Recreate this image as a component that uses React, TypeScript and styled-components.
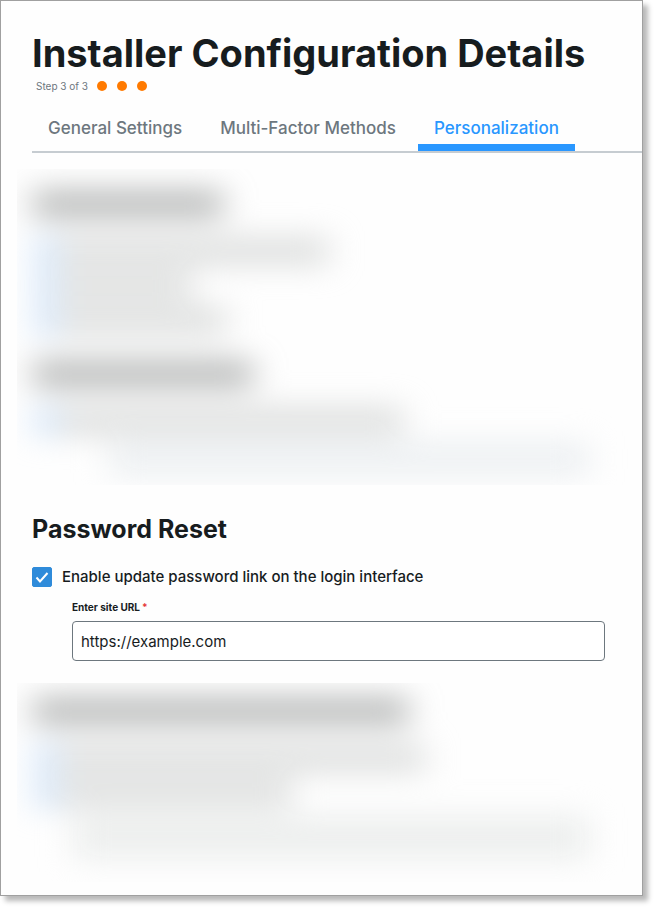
import React, { useState } from "react";
import styled, { createGlobalStyle } from "styled-components";

const GlobalStyle = createGlobalStyle`
  * { box-sizing: border-box; }
  body {
    margin: 0;
    background: #fff;
    color: #171c1e;
    font-family: Inter, "Open Sans", sans-serif;
  }
`;

const Page = styled.div`
  padding: 0 15px 15px 0;
`;

const Panel = styled.main`
  display: flex;
  flex-direction: column;
  padding: 28px 0 13px;
  border: 1px solid #a0a0a0;
  background: #fefefe;
  box-shadow: 5px 5px 5px rgba(0, 0, 0, 0.28);
`;

const Title = styled.h1`
  margin: 0;
  padding-left: 31px;
  font-size: 38px;
  font-weight: 700;
  line-height: 48px;
  white-space: nowrap;
`;

const Steps = styled.div`
  display: flex;
  align-items: center;
  height: 18px;
  padding-left: 35px;
`;

const StepText = styled.span`
  margin-right: 9px;
  color: #6d777e;
  font-size: 10px;
  line-height: 16px;
`;

const Dots = styled.span`
  display: flex;
  gap: 10px;
`;

const Dot = styled.i`
  width: 10px;
  height: 10px;
  border-radius: 50%;
  background: #ff7a00;
`;

const Tabs = styled.nav`
  display: flex;
  gap: 6px;
  height: 58px;
  margin: 0 0 16px 31px;
  padding-top: 22px;
  border-bottom: 2px solid #c6ccd1;
`;

const Tab = styled.button<{ $active: boolean }>`
  padding: 0 16px 5px;
  border: 0;
  border-bottom: 7px solid ${(p) => (p.$active ? "#2997ff" : "transparent")};
  background: none;
  color: ${(p) => (p.$active ? "#2997ff" : "#6d777e")};
  font: 500 17px/20px Inter, "Open Sans", sans-serif;
  white-space: nowrap;
  cursor: pointer;
`;

const Obscured = styled.div`
  overflow: hidden;
  margin-left: 16px;
`;

const Haze = styled.div<{ $top: number; $bottom: number }>`
  display: flex;
  flex-direction: column;
  padding: ${(p) => p.$top}px 37px ${(p) => p.$bottom}px 16px;
  filter: blur(16px);
`;

const HazeHeading = styled.div<{ $width: number }>`
  width: ${(p) => p.$width}px;
  height: 16px;
  margin: 20px 0 29px;
  background: #868988;
`;

const HazeRow = styled.div`
  display: flex;
  height: 20px;
  margin-bottom: 15px;
`;

const HazeBox = styled.i`
  width: 26px;
  background: #c4ddfa;
`;

const HazeText = styled.i<{ $width: number }>`
  width: ${(p) => p.$width}px;
  background: #d1d3d2;
`;

const HazeField = styled.div<{ $indent: number; $height: number; $tint: string }>`
  height: ${(p) => p.$height}px;
  margin: 0 16px 13px ${(p) => p.$indent}px;
  background: ${(p) => p.$tint};
`;

const Section = styled.section`
  display: flex;
  flex-direction: column;
  padding: 28px 37px 22px 31px;
`;

const SectionTitle = styled.h2`
  margin: 0 0 22px;
  font-size: 25px;
  font-weight: 700;
  line-height: 32px;
`;

const CheckLabel = styled.label`
  display: flex;
  align-items: center;
  gap: 10px;
  font-size: 15px;
  font-weight: 500;
  line-height: 20px;
`;

const CheckMark = styled.span`
  display: grid;
  flex: none;
  width: 20px;
  height: 20px;

  > * { grid-area: 1 / 1; }
`;

const CheckBox = styled.input`
  appearance: none;
  width: 20px;
  height: 20px;
  margin: 0;
  border: 1px solid #2f8bda;
  border-radius: 2px;
  background: #fff;

  &:checked { background: #2f8bda; }
`;

const Tick = styled.svg`
  width: 20px;
  height: 20px;
  pointer-events: none;
`;

const Field = styled.div`
  display: flex;
  flex-direction: column;
  gap: 6px;
  margin-left: 40px;
  padding-top: 12px;
`;

const FieldLabel = styled.label`
  font-size: 10px;
  font-weight: 700;
  line-height: 16px;
`;

const Required = styled.span`
  margin-left: 2px;
  color: #e5393b;
`;

const TextInput = styled.input`
  width: 100%;
  height: 40px;
  padding: 0 8px;
  border: 1px solid #6d777e;
  border-radius: 4px;
  background: #fff;
  color: #171c1e;
  font: 400 15px/20px Inter, "Open Sans", sans-serif;
`;

const TABS = ["General Settings", "Multi-Factor Methods", "Personalization"];

function HiddenOption({ width }: { width: number }) {
  return (
    <HazeRow>
      <HazeBox />
      <HazeText $width={width} />
    </HazeRow>
  );
}

export default function App() {
  const [tab, setTab] = useState(TABS[2]);
  const [enabled, setEnabled] = useState(true);
  const [url, setUrl] = useState("https://example.com");

  return (
    <Page>
      <GlobalStyle />
      <Panel>
        <Title>Installer Configuration Details</Title>
        <Steps>
          <StepText>Step 3 of 3</StepText>
          <Dots>
            <Dot />
            <Dot />
            <Dot />
          </Dots>
        </Steps>
        <Tabs>
          {TABS.map((name) => (
            <Tab key={name} $active={name === tab} onClick={() => setTab(name)}>
              {name}
            </Tab>
          ))}
        </Tabs>

        <Obscured aria-hidden="true">
          <Haze $top={7} $bottom={0}>
            <HazeHeading $width={190} />
            <HiddenOption width={270} />
            <HiddenOption width={132} />
            <HiddenOption width={168} />
            <HazeHeading $width={220} />
            <HiddenOption width={344} />
            <HazeField $indent={76} $height={26} $tint="#e8ecef" />
          </Haze>
        </Obscured>

        <Section>
          <SectionTitle>Password Reset</SectionTitle>
          <CheckLabel>
            <CheckMark>
              <CheckBox
                type="checkbox"
                checked={enabled}
                onChange={(e) => setEnabled(e.target.checked)}
              />
              {enabled && (
                <Tick viewBox="0 0 20 20" fill="none" aria-hidden="true">
                  <path d="M4.5 10.5 8 14.5 15.5 6" stroke="#fff" strokeWidth="2" />
                </Tick>
              )}
            </CheckMark>
            Enable update password link on the login interface
          </CheckLabel>
          <Field>
            <FieldLabel htmlFor="site-url">
              Enter site URL<Required>*</Required>
            </FieldLabel>
            <TextInput
              id="site-url"
              type="text"
              value={url}
              onChange={(e) => setUrl(e.target.value)}
            />
          </Field>
        </Section>

        <Obscured aria-hidden="true">
          <Haze $top={0} $bottom={12}>
            <HazeHeading $width={376} />
            <HiddenOption width={366} />
            <HiddenOption width={232} />
            <HazeField $indent={40} $height={39} $tint="#ebedec" />
          </Haze>
        </Obscured>
      </Panel>
    </Page>
  );
}
